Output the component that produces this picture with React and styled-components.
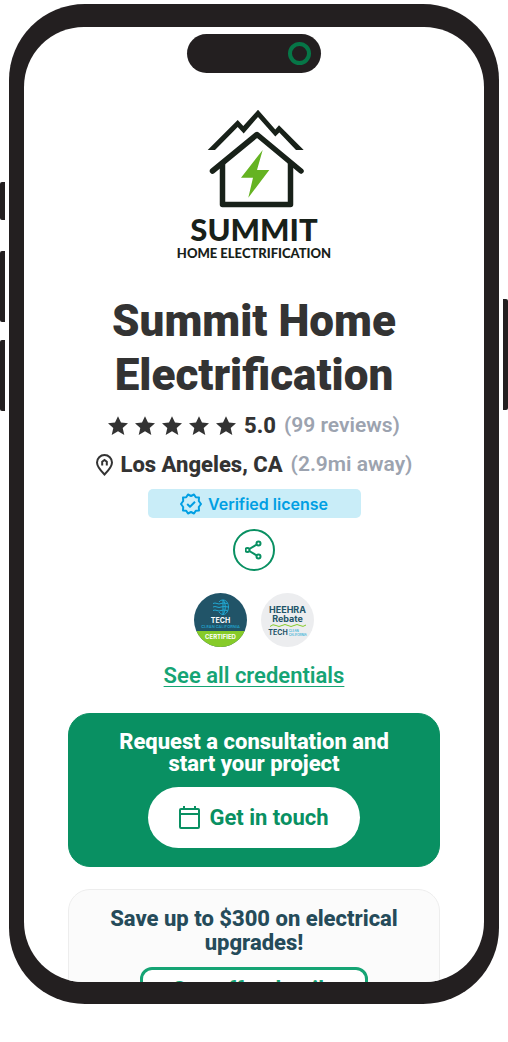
import React from "react";
import styled, { createGlobalStyle } from "styled-components";

const stars = [1, 2, 3, 4, 5];

const GlobalStyle = createGlobalStyle`
  * {
    box-sizing: border-box;
  }
  body {
    margin: 0;
    background: #ffffff;
    color: #333333;
    font-family: Roboto, "Liberation Sans", sans-serif;
  }
  h1, h2, p {
    margin: 0;
  }
  svg {
    display: block;
    flex-shrink: 0;
  }
`;

const Page = styled.div`
  display: flex;
  height: 100vh;
  padding: 4px 0 38px;
`;

const Rail = styled.div`
  display: flex;
  flex-direction: column;
  align-items: ${({ $side }) => ($side === "left" ? "flex-start" : "flex-end")};
  gap: ${({ $gap }) => $gap || 0}px;
  width: 9px;
  padding-top: ${({ $top }) => $top}px;
`;

const SideKey = styled.div`
  width: 5px;
  height: ${({ $height }) => $height}px;
  border-radius: ${({ $side }) => ($side === "left" ? "2px 0 0 2px" : "0 2px 2px 0")};
  background: #231f20;
`;

const Phone = styled.div`
  flex: 1;
  min-width: 0;
  padding: 23px 15px 22px;
  border-radius: 76px;
  background: #231f20;
`;

const Screen = styled.main`
  display: flex;
  flex-direction: column;
  align-items: center;
  height: 100%;
  padding: 7px 44px 0;
  overflow: hidden;
  border-radius: 60px;
  background: #ffffff;
`;

const Notch = styled.div`
  display: flex;
  flex-shrink: 0;
  align-items: center;
  justify-content: flex-end;
  width: 134px;
  height: 39px;
  padding-right: 10px;
  border-radius: 20px;
  background: #231f20;
`;

const Lens = styled.div`
  width: 23px;
  height: 23px;
  border: 4px solid #067647;
  border-radius: 50%;
`;

const Logo = styled.div`
  display: flex;
  flex-direction: column;
  align-items: center;
  margin-top: 36px;
  color: #182119;
  font-family: Lato, sans-serif;
  font-weight: 900;
  white-space: nowrap;
`;

const LogoName = styled.div`
  margin-top: 4px;
  font-size: 31px;
  line-height: 34px;
`;

const LogoTag = styled.div`
  font-size: 13px;
  line-height: 15px;
`;

const Title = styled.h1`
  margin-top: 33px;
  font-size: 44px;
  font-weight: 900;
  line-height: 54px;
  text-align: center;
`;

const Facts = styled.div`
  display: flex;
  flex-direction: column;
  align-items: center;
  margin-top: 4px;
`;

const Fact = styled.p`
  display: flex;
  align-items: center;
  gap: 8px;
  font-size: 22px;
  line-height: 39px;
  white-space: nowrap;
`;

const Stars = styled.span`
  display: flex;
  gap: 7px;
`;

const Strong = styled.strong`
  font-weight: 800;
`;

const Muted = styled.span`
  color: #9ca3af;
  font-size: 21px;
  font-weight: 600;
`;

const License = styled.div`
  display: flex;
  flex-shrink: 0;
  align-items: center;
  justify-content: center;
  gap: 6px;
  width: 213px;
  height: 29px;
  margin-top: 5px;
  border-radius: 5px;
  background: #c9edf8;
  color: #009fe3;
  font-family: Inter, sans-serif;
  font-size: 16px;
  font-weight: 600;
`;

const ShareButton = styled.button`
  display: flex;
  flex-shrink: 0;
  align-items: center;
  justify-content: center;
  width: 42px;
  height: 42px;
  margin-top: 11px;
  padding: 0;
  border: 2px solid #099062;
  border-radius: 50%;
  background: #ffffff;
  color: #099062;
`;

const Badges = styled.div`
  display: flex;
  gap: 14px;
  margin-top: 22px;
`;

const Badge = styled.div`
  display: flex;
  flex-direction: column;
  align-items: center;
  width: 53px;
  height: 54px;
  padding-top: ${({ $light }) => ($light ? 12 : 6)}px;
  overflow: hidden;
  border-radius: 50%;
  background: ${({ $light }) => ($light ? "#ecedef" : "#215468")};
  color: ${({ $light }) => ($light ? "#215468" : "#ffffff")};
  font-family: Inter, sans-serif;
  font-weight: 700;
  white-space: nowrap;
`;

const TechName = styled.div`
  font-size: 7px;
  line-height: 9px;
`;

const TechRegion = styled.div`
  color: #21a9d4;
  font-size: 4px;
  font-weight: 500;
  line-height: 4px;
`;

const Certified = styled.div`
  flex: 1;
  align-self: stretch;
  margin-top: 2px;
  background: #86cb29;
  font-size: 6px;
  line-height: 12px;
  text-align: center;
`;

const RebateName = styled.div`
  font-size: 9px;
  line-height: 9px;
`;

const RebateFooter = styled.div`
  display: flex;
  align-items: center;
  gap: 1px;
  margin-top: 1px;
  font-size: 7px;
  line-height: 8px;
`;

const RebateRegion = styled.span`
  color: #21a9d4;
  font-size: 3px;
  font-weight: 500;
  line-height: 4px;
`;

const CredentialsLink = styled.a`
  margin-top: 14px;
  color: #15a474;
  font-size: 22px;
  font-weight: 600;
  line-height: 30px;
  text-decoration: underline;
  text-decoration-thickness: 1px;
  text-underline-offset: 3px;
`;

const Card = styled.section`
  display: flex;
  flex-direction: column;
  flex-shrink: 0;
  align-items: center;
  align-self: stretch;
  margin-top: 22px;
  padding: 17px 40px 18px;
  border: 1px solid ${({ $offer }) => ($offer ? "#ededed" : "#099062")};
  border-radius: 22px;
  background: ${({ $offer }) => ($offer ? "#fbfbfb" : "#099062")};
`;

const CardTitle = styled.h2`
  color: ${({ $offer }) => ($offer ? "#254b5a" : "#ffffff")};
  font-size: 22px;
  font-weight: 800;
  line-height: ${({ $offer }) => ($offer ? 24 : 22)}px;
  text-align: center;
`;

const ContactButton = styled.button`
  display: flex;
  align-items: center;
  justify-content: center;
  gap: 8px;
  width: 212px;
  height: 61px;
  margin-top: 12px;
  padding: 0;
  border: 0;
  border-radius: 31px;
  background: #ffffff;
  color: #099062;
  font-family: inherit;
  font-size: 22px;
  font-weight: 700;
`;

const OfferButton = styled.button`
  width: 228px;
  height: 44px;
  margin-top: 12px;
  padding: 0;
  border: 3px solid #15a474;
  border-radius: 12px;
  background: #ffffff;
  color: #15a474;
  font-family: inherit;
  font-size: 22px;
  font-weight: 700;
`;

const HouseMark = () => (
  <svg width="100" height="99" viewBox="-1 0 100 99" fill="none" aria-hidden="true">
    <path d="M2.700 41L32.700 11L38.300 17L53 .7L70.300 20.500L74 16.300L98.700 41H91L74.300 23.500L70.300 27.500L53 8L38.700 24.500L32.700 18L10 41Z" fill="#182119" />
    <g stroke="#182119" strokeWidth="5.500">
      <path d="M7.500 62L52 25.500L96 62" strokeLinecap="round" strokeLinejoin="round" />
      <path d="M17.500 54V95.500H85.500V54" strokeLinejoin="round" />
    </g>
    <path d="M57.700 41L36 68.700H48L43.300 88.700L64.300 61H52Z" fill="#65b322" />
  </svg>
);

const Star = () => (
  <svg width="20" height="20" viewBox="0 0 20 20" aria-hidden="true">
    <path d="M10 .2L13 6.600L20 7.300L14.700 11.900L16.300 19L10 15.200L3.700 19L5.300 11.900L0 7.300L7 6.600Z" fill="#333333" />
  </svg>
);

const HomePin = () => (
  <svg width="17" height="22" viewBox="0 0 17 22" fill="none" stroke="#333333" aria-hidden="true">
    <path d="M8.500 20.500C5 17 1 13 1 8.500a7.500 7.500 0 0 1 15 0C16 13 12 17 8.500 20.500Z" strokeWidth="2" />
    <path d="M6.200 11.500V7.700L8.500 5.900L10.800 7.700V11.500" strokeWidth="2" />
  </svg>
);

const VerifiedIcon = () => (
  <svg width="22" height="22" viewBox="0 0 22 22" fill="none" stroke="#009fe3" strokeWidth="2" strokeLinejoin="round" aria-hidden="true">
    <path d="M11 3L14 1.500L15.800 4.300L19 4.500L18.800 8L21 11L18.800 14L19 17.500L15.800 17.700L14 20.500L11 19L8 20.500L6.200 17.700L3 17.500L3.200 14L1 11L3.200 8L3 4.500L6.200 4.300L8 1.500Z" />
    <path d="M7.200 11L10 13.700L15 8.700" />
  </svg>
);

const ShareIcon = () => (
  <svg width="18" height="20" viewBox="1 0 18 20" fill="none" stroke="currentColor" strokeWidth="2" aria-hidden="true">
    <circle cx="3.500" cy="10" r="2" />
    <circle cx="14.500" cy="3.500" r="2" />
    <circle cx="14.500" cy="16.500" r="2" />
    <path d="M5.300 9L12.700 4.600M5.300 11L12.700 15.400" />
  </svg>
);

const GlobeMark = () => (
  <svg width="18" height="17" viewBox="0 0 18 17" fill="none" stroke="#21a9d4" strokeWidth="1" aria-hidden="true">
    <path d="M7 3C8 1.500 9.500 1 11 1C14.500 1 16.500 4.500 16.500 8S14.500 15.500 11 15.500C9.500 15.500 8 14.500 7 13" />
    <path d="M11 1V15.500M11 1C14 4 14 12 11 15.500" />
    <path d="M1 4.500Q3 3.500 5 4.500T9 4.500T15.500 4.500M1 8Q3 7 5 8T9 8T16.500 8M1 11.500Q3 10.500 5 11.500T9 11.500T15.500 11.500" />
  </svg>
);

const Wave = () => (
  <svg width="38" height="5" viewBox="0 0 38 5" fill="none" aria-hidden="true">
    <path d="M1 3.500Q4 .5 7 2.500T13 2.500T19 2.500T25 2.500T31 2.500T37 2" stroke="#86cb29" />
  </svg>
);

const CalendarIcon = () => (
  <svg width="22" height="24" viewBox="0 0 22 24" fill="none" stroke="currentColor" strokeWidth="2" aria-hidden="true">
    <rect x="1" y="3" width="19" height="19" rx="1" />
    <path d="M1 8H20M5 0V3M16 0V3" />
  </svg>
);

const App = () => {
  return (
    <Page>
      <GlobalStyle />
      <Rail $side="left" $top={178}>
        <SideKey $side="left" $height={38} />
        <Rail $side="left" $top={31} $gap={18}>
          <SideKey $side="left" $height={71} />
          <SideKey $side="left" $height={71} />
        </Rail>
      </Rail>
      <Phone>
        <Screen>
          <Notch>
            <Lens />
          </Notch>
          <Logo>
            <HouseMark />
            <LogoName>SUMMIT</LogoName>
            <LogoTag>HOME ELECTRIFICATION</LogoTag>
          </Logo>
          <Title>Summit Home Electrification</Title>
          <Facts>
            <Fact>
              <Stars>
                {stars.map((star) => (
                  <Star key={star} />
                ))}
              </Stars>
              <Strong>5.0</Strong>
              <Muted>(99 reviews)</Muted>
            </Fact>
            <Fact>
              <HomePin />
              <Strong>Los Angeles, CA</Strong>
              <Muted>(2.9mi away)</Muted>
            </Fact>
          </Facts>
          <License>
            <VerifiedIcon />
            Verified license
          </License>
          <ShareButton type="button" aria-label="Share">
            <ShareIcon />
          </ShareButton>
          <Badges>
            <Badge>
              <GlobeMark />
              <TechName>TECH</TechName>
              <TechRegion>CLEAN CALIFORNIA</TechRegion>
              <Certified>CERTIFIED</Certified>
            </Badge>
            <Badge $light>
              <RebateName>HEEHRA</RebateName>
              <RebateName>Rebate</RebateName>
              <Wave />
              <RebateFooter>
                TECH
                <RebateRegion>
                  CLEAN
                  <br />
                  CALIFORNIA
                </RebateRegion>
              </RebateFooter>
            </Badge>
          </Badges>
          <CredentialsLink href="#credentials">See all credentials</CredentialsLink>
          <Card>
            <CardTitle>Request a consultation and start your project</CardTitle>
            <ContactButton type="button">
              <CalendarIcon />
              Get in touch
            </ContactButton>
          </Card>
          <Card $offer>
            <CardTitle $offer>Save up to $300 on electrical upgrades!</CardTitle>
            <OfferButton type="button">See offer details</OfferButton>
          </Card>
        </Screen>
      </Phone>
      <Rail $side="right" $top={295}>
        <SideKey $side="right" $height={111} />
      </Rail>
    </Page>
  );
};

export default App;
